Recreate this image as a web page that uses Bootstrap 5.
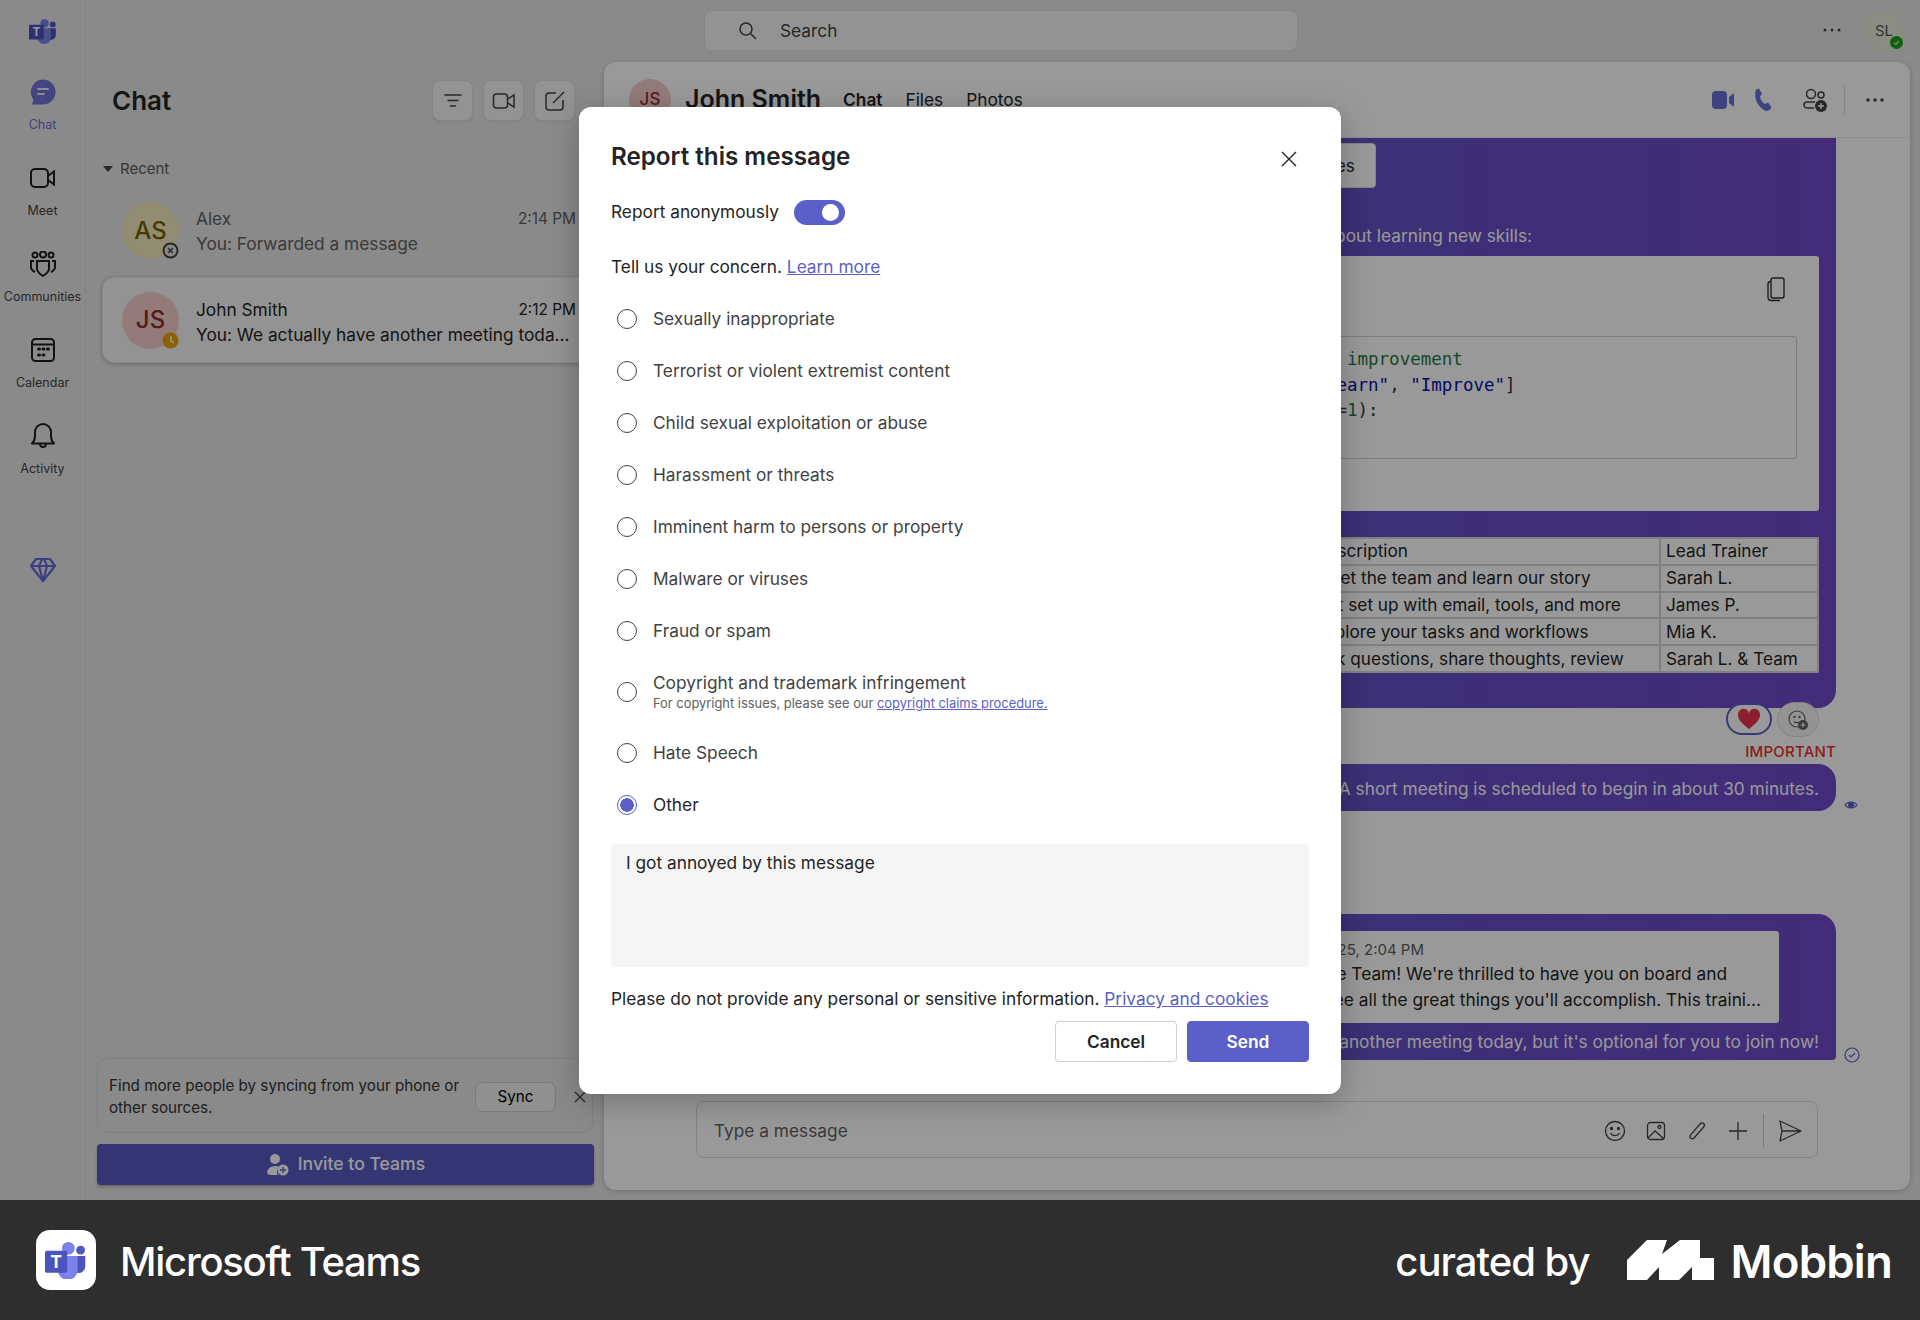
<!DOCTYPE html>
<html lang="en">
<head>
<meta charset="utf-8">
<title>Microsoft Teams</title>
<link href="https://cdn.jsdelivr.net/npm/bootstrap@5.3.0/dist/css/bootstrap.min.css" rel="stylesheet">
<style>
:root{--brand:#5b5fc7;}
html,body{margin:0;height:1320px;overflow:hidden;}
body{font-family:Inter,"Liberation Sans",sans-serif;font-size:17.3px;color:#242424;background:#2e2e2e;}
.stage{position:relative;height:1200px;overflow:hidden;background:#e6e6e6;}
.dim{position:absolute;inset:0;background:rgba(0,0,0,.4);}
.rail{width:86px;flex:none;border-right:1px solid #dcdcdc;}
.rail-logo{height:73px;padding-top:17px;}
.rail-item{height:86px;padding-top:6px;color:#424242;font-size:12.5px;}
.rail-item svg{display:block;height:26px;margin:0 auto;}
.rail-item span{display:block;margin-top:11px;line-height:18px;text-align:center;white-space:nowrap;}
.rail-item.on span{color:#6a6ec9;}
.rail-gem{margin-top:53px;}
.topbar{height:62px;}
.top-side{flex:1 1 0;}
.searchbox{width:594px;height:41px;margin:10px 0 0 12px;background:#f5f5f5;border:1px solid #e0e0e0;border-radius:8px;padding-left:33px;font-size:17.3px;color:#424242;gap:22px;}
.top-right{padding-right:16px;gap:22px;padding-top:11px;}
.me{width:40px;height:40px;border-radius:50%;background:#e6ecd9;color:#555;font-size:15px;position:relative;}
.me svg{position:absolute;right:1px;bottom:2px;}
.listcol{width:518px;flex:none;}
.list-head{margin:18px 29px 0 26px;height:41px;}
.list-title{font-size:26px;font-weight:600;}
.tool-row{gap:10px;}
.tool{width:41px;height:41px;background:#f5f5f5;border:1px solid #e0e0e0;border-radius:8px;box-shadow:0 1px 2px rgba(0,0,0,.08);}
.recent{margin:39px 0 0 17px;height:18px;font-size:15px;color:#5a5a5a;gap:7px;}
.tri{width:0;height:0;border:5px solid transparent;border-top:6px solid #424242;border-bottom:0;}
.person{height:86px;margin:0 -40px 0 11px;padding:0 0 0 25px;border-radius:12px;gap:17px;}
.person.sel{background:#f5f5f5;border:1px solid #e6e6e6;box-shadow:0 1px 4px rgba(0,0,0,.25);margin:3px -40px 0 16px;padding-left:19px;}
.person.first{margin-top:9px;height:87px;}
.ava{width:57px;height:57px;border-radius:50%;position:relative;font-size:24px;font-weight:500;flex:none;}
.ava-as{background:#f3e9c0;color:#7a6300;}
.ava-js{background:#f3cdca;color:#8c2f2a;}
.ava svg{position:absolute;right:0;bottom:0;}
.person-text{width:380px;line-height:25px;}
.person.sel .person-text{padding-top:3px;}
.person-time{font-size:15.4px;}
.muted-t{color:#616161;}
.sync{margin:auto 11px 11px 11px;height:75px;border:1px solid #d6d6d6;border-radius:10px;padding:2px 0 0 11px;font-size:15.2px;line-height:22px;color:#333;}
.sync-text{width:366px;}
.syncbtn{width:81px;height:30px;border:1px solid #ccc;border-radius:8px;background:#f0f0f0;font-size:15.2px;}
.sync-x{margin-left:18px;}
.invite{margin:0 10px 15px 11px;height:41px;background:#585bc2;border:0;border-radius:4px;color:#fff;font-size:17.6px;font-weight:500;gap:9px;box-shadow:0 2px 3px rgba(0,0,0,.25);}
.chatpanel{margin:0 10px 10px 0;background:#fff;border-radius:12px;box-shadow:0 1px 5px rgba(0,0,0,.2);overflow:hidden;min-width:0;}
.chat-head{height:76px;flex:none;border-bottom:1px solid #eee;padding:0 22px 0 25px;}
.ava-sm{width:42px;height:42px;font-size:17px;margin-right:14px;}
.chat-name{font-size:25px;font-weight:600;margin-right:22px;}
.chat-tab{margin-right:23px;}
.chat-tab.on{font-weight:600;}
.chat-tools{margin-left:auto;}
.tool-v{margin-right:18px;}
.tool-p{margin-right:29px;}
.chat-sep{width:1px;height:30px;background:#ddd;margin:0 21px 0 16px;}
.msgs{padding-right:74px;min-height:0;}
.bubble{width:686px;background:linear-gradient(90deg,#5e54c2,#7049cb);color:#fff;position:relative;}
.bub-a{height:570px;border-radius:0 0 18px 0;padding:5px 17px 0 0;}
.bub-note{margin:0 443px 0 auto;width:130px;height:45px;background:#fff;border:1px solid #ddd;border-radius:4px;color:#242424;padding-right:20px;}
.bub-line{margin:36px 287px 0 0;line-height:24px;height:24px;text-align:right;white-space:nowrap;}
.codewrap{margin-top:8px;height:255px;background:#fff;border-radius:0 3px 3px 0;padding:0 22px 0 0;}
.codetop{height:80px;padding:20px 9px 0 0;}
.codebox{margin:0 0 0 auto;height:123px;border:1px solid #d1d1d1;border-radius:3px;padding:10px 0 0 15px;width:603px;font-family:"DejaVu Sans Mono","Liberation Mono",monospace;font-size:17.5px;line-height:25.5px;color:#333;overflow:hidden;}
.c-g{color:#1f7a3f;}.c-b{color:#0b0ba8;}
.plan{width:513px;margin:26px 0 0 auto;background:#fff;border-collapse:collapse;color:#242424;font-size:17.2px;line-height:24px;}
.plan td{border:2px solid #d6d6d6;padding:0 7px;height:26.8px;white-space:nowrap;}
.plan td:last-child{width:158px;padding:0 5px;}
.reacts{margin:-6px 17px 0 0;gap:5px;height:35px;position:relative;}
.r-heart{width:46px;height:32px;margin-top:1px;border:2px solid var(--brand);border-radius:16px;background:#fff;}
.r-add{width:42px;height:35px;border:1px solid #ddd;border-radius:18px;background:#f5f5f5;}
.imp{color:#ee2f30;font-size:15px;font-weight:500;line-height:18px;margin-top:6px;letter-spacing:.2px;}
.imp-hold{height:27px;}
.bub-b{height:47px;border-radius:18px 18px 18px 0;padding-right:17px;line-height:49px;text-align:right;white-space:nowrap;}
.side-ic{position:absolute;left:100%;margin-left:8px;bottom:-1px;}
.side-low{bottom:-3px;}
.bub-c{margin-top:103px;height:146px;border-radius:18px 18px 4px 0;padding:17px 0 0 0;}
.reply{margin-right:57px;height:92px;background:#fff;border-radius:0 3px 3px 0;color:#242424;padding-top:7px;line-height:25.5px;text-align:right;white-space:nowrap;overflow:hidden;}
.rl-a{margin-right:355px;color:#616161;font-size:15px;line-height:23px;}
.rl-b{margin-right:52px;}
.rl-c{margin-right:18px;}
.bub-tail{margin:6px 17px 0 0;line-height:26px;text-align:right;white-space:nowrap;}
.compose{margin:0 92px 32px;height:57px;flex:none;border:1px solid #dcdcdc;border-radius:8px;padding:2px 0 0 17px;color:#616161;}
.comp-icons{margin-left:auto;padding-right:15px;}
.comp-ic{width:41px;display:flex;justify-content:center;}
.comp-sep{width:1px;height:34px;background:#ccc;margin:0 14px 0 5px;}
/* dialog */
.report{position:absolute;left:579px;top:107px;width:762px;height:987px;border:0;border-radius:12px;padding:32px;background:#fff;box-shadow:0 8px 30px rgba(0,0,0,.25);}
.rep-title{font-size:24.2px;font-weight:600;line-height:36px;margin:0;color:#242424;}
.rep-close{margin:3px 12px 0 0;}
.rep-anon{margin-top:24px;height:26px;gap:15px;}
.rep-switch{width:51px;height:25px;border-radius:13px;background:var(--brand);flex:none;position:relative;display:block;}
.rep-switch::after{content:"";position:absolute;right:6px;top:4px;width:17px;height:17px;border-radius:50%;background:#fff;}
.rep-tell{margin-top:29px;line-height:26px;}
.rep-tell a,.rep-foot a,.rep-sub a{color:var(--brand);}
.reasons{margin:13px 0 0 0;}
.reason{display:flex;align-items:center;height:52px;margin:0;padding:0;color:#424242;gap:16px;}
.reason .form-check-input{float:none;margin:0 0 0 6px;width:20px;height:20px;border:1.5px solid #424242;flex:none;}
.reason .form-check-input:checked{background-color:#fff;border-color:var(--brand);background-image:radial-gradient(circle,var(--brand) 0,var(--brand) 6.5px,transparent 7px);}
.reason.wide{height:70px;}
.reason.sel{color:#242424;}
.rep-sub{font-size:12.9px;line-height:16px;color:#616161;margin-top:2px;}
.rep-label{line-height:22px;}
.rep-area{margin-top:13px;height:123px;background:#f5f5f5;border:0;border-radius:4px;padding:7px 15px;font-size:17.3px;line-height:24px;color:#242424;resize:none;box-shadow:none;}
.rep-foot{margin-top:19px;line-height:26px;}
.rep-btns{margin-top:9px;gap:10px;}
.rep-btn{width:122px;height:41px;border-radius:4px;font-size:17.3px;font-weight:600;padding:0;}
.rep-cancel{background:#fff;border:1px solid #d1d1d1;color:#242424;}
.rep-send{background:var(--brand);border:1px solid var(--brand);color:#fff;}
/* footer */
.credit{height:120px;background:#2e2e2e;color:#fff;padding:0 28px 0 36px;}
.credit-app{width:60px;height:60px;background:#fff;border-radius:14px;margin-right:24px;}
.credit-name{font-size:40px;font-weight:500;letter-spacing:-1.25px;padding-top:4px;}
.credit-by{font-size:40px;font-weight:500;letter-spacing:-1px;margin-right:37px;padding-top:4px;}
.credit-mob{font-size:45.5px;font-weight:600;letter-spacing:-.8px;margin-left:17px;padding-top:4px;}
</style>
</head>
<body>
<div class="stage">
 <div class="d-flex h-100">
  <nav class="rail d-flex flex-column">
   <div class="rail-logo text-center"><svg width="28" height="26" viewBox="0 0 36 32"><circle cx="20" cy="6" r="5.500" fill="#7b83eb"/><circle cx="30.500" cy="7.500" r="3.800" fill="#4f57bf"/><path d="M24.500 12.500h10v9a5.500 5.500 0 0 1-8 5z" fill="#4b53bc"/><path d="M11 12.500h17v12a8.500 8.500 0 0 1-17 0z" fill="#7b83eb"/><rect x="0" y="8" width="19" height="19" rx="1.500" fill="#4b53bc"/><text x="9.500" y="23" font-size="15" font-weight="700" font-family="Inter,sans-serif" fill="#fff" text-anchor="middle">T</text></svg></div>
   <div class="rail-item on"><svg width="28" height="26" viewBox="0 0 28 26"><path d="M14 .5a12.500 12.500 0 0 1 0 25H2.500c1.500-2 2-3.500 1.500-5.500A12.500 12.500 0 0 1 14 .5z" fill="#7073d6"/><path d="M9 10h10M9 15h6" stroke="#e8e8f8" stroke-width="2" stroke-linecap="round"/></svg><span>Chat</span></div>
   <div class="rail-item"><svg width="28" height="26" viewBox="0 0 28 26" fill="none" stroke="#1f1f1f" stroke-width="2"><rect x="2" y="4" width="17" height="18" rx="4"/><path d="M19 11l6-4.500v13L19 15"/></svg><span>Meet</span></div>
   <div class="rail-item"><svg width="28" height="26" viewBox="0 0 28 26" fill="none" stroke="#1f1f1f" stroke-width="2"><circle cx="6" cy="4" r="2.500"/><circle cx="14" cy="3.500" r="3"/><circle cx="22" cy="4" r="2.500"/><path d="M8 10h12v8c0 3-3 5-6 7-3-2-6-4-6-7z"/><path d="M5 10H2v6c0 2 2 4 4 5M23 10h3v6c0 2-2 4-4 5"/></svg><span>Communities</span></div>
   <div class="rail-item"><svg width="28" height="26" viewBox="0 0 28 26" fill="none" stroke="#1f1f1f" stroke-width="2"><rect x="3" y="2" width="22" height="22" rx="3.500"/><path d="M3 7.500h22"/><path d="M9.500 12h1M14 12h1M18.500 12h1M9.500 18h1M14 18h1" stroke-width="3" stroke-linecap="round"/></svg><span>Calendar</span></div>
   <div class="rail-item"><svg width="28" height="26" viewBox="0 0 28 26" fill="none" stroke="#1f1f1f" stroke-width="2"><path d="M3 20.500c2-2 3-3.500 3-7.500V9a8 8 0 0 1 16 0v4c0 4 1 5.500 3 7.500z" stroke-linejoin="round"/><path d="M11 21a3 3 0 0 0 6 0"/></svg><span>Activity</span></div>
   <div class="rail-gem text-center"><svg width="26" height="24" viewBox="0 0 26 24" fill="none" stroke="#6468d8" stroke-width="2.200" stroke-linejoin="round"><path d="M6 1h14l5 7-12 15L1 8z"/><path d="M1 8h24M9 8l4 15 4-15M9 8l3-7h2l3 7"/></svg></div>
  </nav>
  <div class="flex-grow-1 d-flex flex-column min-w-0">
   <header class="topbar d-flex flex-none">
    <div class="top-side"></div>
    <div class="searchbox d-flex align-items-center"><svg width="20" height="20" viewBox="0 0 20 20" fill="none" stroke="#424242" stroke-width="1.500"><circle cx="8" cy="8" r="6"/><path d="M12.500 12.500L18 18"/></svg><span>Search</span></div>
    <div class="top-side top-right d-flex justify-content-end"><svg width="20" height="40" viewBox="0 0 20 40" fill="#424242"><circle cx="3" cy="19" r="1.500"/><circle cx="10" cy="19" r="1.500"/><circle cx="17" cy="19" r="1.500"/></svg><div class="me d-flex align-items-center justify-content-center">SL<svg width="13" height="13" viewBox="0 0 13 13"><circle cx="6.500" cy="6.500" r="6.500" fill="#16a016"/><path d="M4 6.700l1.800 1.800L9 5" stroke="#e6e6e6" stroke-width="1.200" fill="none"/></svg></div></div>
   </header>
   <div class="flex-grow-1 d-flex min-h-0">
    <aside class="listcol d-flex flex-column">
     <div class="list-head d-flex align-items-center">
      <div class="list-title me-auto">Chat</div>
      <div class="d-flex tool-row">
       <div class="tool d-flex align-items-center justify-content-center"><svg width="20" height="20" viewBox="0 0 20 20" stroke="#424242" stroke-width="1.500" stroke-linecap="round"><path d="M2 4h16M5 9.500h10M7.500 15h5"/></svg></div>
       <div class="tool d-flex align-items-center justify-content-center"><svg width="24" height="20" viewBox="0 0 24 20" fill="none" stroke="#424242" stroke-width="1.500"><rect x="1.500" y="3" width="14" height="14" rx="3"/><path d="M16 8l6-4v12l-6-4"/></svg></div>
       <div class="tool d-flex align-items-center justify-content-center"><svg width="22" height="22" viewBox="0 0 22 22" fill="none" stroke="#424242" stroke-width="1.500"><path d="M12 3H5a3 3 0 0 0-3 3v11a3 3 0 0 0 3 3h11a3 3 0 0 0 3-3v-7"/><path d="M9 13l11-11"/></svg></div>
      </div>
     </div>
     <div class="recent d-flex align-items-center"><span class="tri"></span><span>Recent</span></div>
     <div class="person first d-flex align-items-center">
      <div class="ava ava-as d-flex align-items-center justify-content-center">AS<svg width="17" height="17" viewBox="0 0 17 17"><circle cx="8.500" cy="8.500" r="7" fill="#e6e6e6" stroke="#424242" stroke-width="2"/><path d="M6 6l5 5M11 6l-5 5" stroke="#424242" stroke-width="1.500"/></svg></div>
      <div class="person-text"><div class="d-flex justify-content-between align-items-center muted-t"><span>Alex</span><span class="person-time">2:14 PM</span></div><div class="muted-t">You: Forwarded a message</div></div>
     </div>
     <div class="person sel d-flex align-items-center">
      <div class="ava ava-js d-flex align-items-center justify-content-center">JS<svg width="17" height="17" viewBox="0 0 17 17"><circle cx="8.500" cy="8.500" r="8" fill="#eaa300"/><path d="M9 4v5l3 2" stroke="#fff" stroke-width="1.500" fill="none"/></svg></div>
      <div class="person-text"><div class="d-flex justify-content-between align-items-center"><span>John Smith</span><span class="person-time">2:12 PM</span></div><div class="text-truncate">You: We actually have another meeting toda...</div></div>
     </div>
     <div class="sync d-flex align-items-center">
      <div class="sync-text">Find more people by syncing from your phone or other sources.</div>
      <button class="syncbtn" type="button">Sync</button>
      <svg class="sync-x" width="12" height="12" viewBox="0 0 12 12" stroke="#424242" stroke-width="1.300"><path d="M1 1l10 10M11 1L1 11"/></svg>
     </div>
     <button class="invite d-flex align-items-center justify-content-center" type="button"><svg width="23" height="23" viewBox="0 0 23 23" fill="#fff"><circle cx="9" cy="6" r="5"/><path d="M1 20a8 7 0 0 1 8-7c2 0 3 .5 4 1a6 6 0 0 0-1 8H5a4 4 0 0 1-4-2z"/><circle cx="17" cy="17" r="5.500"/><path d="M17 14v6M14 17h6" stroke="#5b5fc7" stroke-width="1.300"/></svg><span>Invite to Teams</span></button>
    </aside>
    <main class="chatpanel flex-grow-1 d-flex flex-column">
     <div class="chat-head d-flex align-items-center">
      <div class="ava ava-js ava-sm d-flex align-items-center justify-content-center">JS</div>
      <div class="chat-name">John Smith</div>
      <div class="chat-tab on">Chat</div><div class="chat-tab">Files</div><div class="chat-tab">Photos</div>
      <div class="chat-tools d-flex align-items-center">
       <svg class="tool-v" width="24" height="20" viewBox="0 0 24 20" fill="#6a6ed8"><rect x="1" y="1" width="15" height="18" rx="4"/><path d="M18 7l5-4v14l-5-4z"/></svg>
       <svg class="tool-p" width="20" height="24" viewBox="0 0 20 24" fill="#6a6ed8"><path d="M3 1.500l3-1 3 5.500-2 2.500c.5 3 2 5.500 5 7.500l3-1.500 3.500 5c-1 2-3 3.500-5 3.500C6 21 0 10 3 1.500z"/></svg>
       <svg width="26" height="24" viewBox="0 0 26 24" fill="none" stroke="#424242" stroke-width="1.500"><circle cx="9" cy="6" r="4.500"/><circle cx="19" cy="7" r="3"/><path d="M13 14H5c-2 0-3 1-3 3s2 3 3 3h7"/><circle cx="19" cy="18" r="6" fill="#424242" stroke="none"/><path d="M19 15v6M16 18h6" stroke="#fff"/></svg>
       <span class="d-block chat-sep"></span>
       <svg class="me-1" width="18" height="6" viewBox="0 0 18 6" fill="#424242"><circle cx="2" cy="3" r="1.700"/><circle cx="9" cy="3" r="1.700"/><circle cx="16" cy="3" r="1.700"/></svg>
      </div>
     </div>
     <div class="msgs flex-grow-1 d-flex flex-column align-items-end">
      <div class="bubble bub-a">
       <div class="bub-note d-flex align-items-center justify-content-end">Notes</div>
       <div class="bub-line">Let's talk about learning new skills:</div>
       <div class="codewrap">
        <div class="codetop d-flex justify-content-end"><svg width="24" height="26" viewBox="0 0 24 26" fill="none" stroke="#333" stroke-width="1.400"><rect x="7" y="2" width="13" height="20" rx="2"/><path d="M7 5.500C5 5.500 4 6.500 4 8v13c0 2 1.500 3.500 3.500 3.500H16"/></svg></div>
<pre class="codebox"><span class="c-g"># Continuous improvement</span>
skills = [<span class="c-b">"Learn"</span>, <span class="c-b">"Improve"</span>]
enum(step, n=<span class="c-g">1</span>):</pre>
       </div>
       <table class="plan">
        <tr><td>Description</td><td>Lead Trainer</td></tr>
        <tr><td>Meet the team and learn our story</td><td>Sarah L.</td></tr>
        <tr><td>Get set up with email, tools, and more</td><td>James P.</td></tr>
        <tr><td>Explore your tasks and workflows</td><td>Mia K.</td></tr>
        <tr><td>Ask questions, share thoughts, review</td><td>Sarah L. &amp; Team</td></tr>
       </table>
      </div>
      <div class="reacts d-flex">
       <div class="r-heart d-flex align-items-center justify-content-center"><svg width="24" height="22" viewBox="0 0 24 22"><path d="M12 21C4 15 1 11 1 7a5.500 5.500 0 0 1 11-1.500A5.500 5.500 0 0 1 23 7c0 4-3 8-11 14z" fill="#e8344e"/></svg></div>
       <div class="r-add d-flex align-items-center justify-content-center"><svg width="22" height="22" viewBox="0 0 22 22" fill="none" stroke="#616161" stroke-width="1.200"><circle cx="10" cy="10" r="8"/><circle cx="7.500" cy="8" r=".6"/><circle cx="12.500" cy="8" r=".6"/><path d="M7 12.500c1.500 1.500 4 1.500 5 .5"/><circle cx="16" cy="16" r="5" fill="#616161" stroke="none"/><path d="M16 13.500v5M13.500 16h5" stroke="#fff"/></svg></div>
      </div>
      <div class="imp-hold"><div class="imp">IMPORTANT</div></div>
      <div class="bubble bub-b">A short meeting is scheduled to begin in about 30 minutes.<svg class="side-ic" width="14" height="14" viewBox="0 0 14 14" fill="none" stroke="#5b5fc7" stroke-width="1.200"><path d="M1 7c3-4 9-4 12 0-3 4-9 4-12 0z"/><circle cx="7" cy="7" r="2.500" fill="#5b5fc7"/></svg></div>
      <div class="bubble bub-c">
       <div class="reply">
        <div class="rl-a">Jan 25, 2:04 PM</div>
        <div class="rl-b">Welcome to the Team! We're thrilled to have you on board and</div>
        <div class="rl-c">can't wait to see all the great things you'll accomplish. This traini...</div>
       </div>
       <div class="bub-tail">We actually have another meeting today, but it's optional for you to join now!</div>
       <svg class="side-ic side-low" width="16" height="16" viewBox="0 0 16 16" fill="none" stroke="#5b5fc7" stroke-width="1.200"><circle cx="8" cy="8" r="7"/><path d="M5 8l2 2 4-4"/></svg>
      </div>
     </div>
     <div class="compose d-flex align-items-center">
      <span>Type a message</span>
      <div class="comp-icons d-flex align-items-center">
       <div class="comp-ic"><svg width="22" height="22" viewBox="0 0 22 22" fill="none" stroke="#424242" stroke-width="1.300"><circle cx="11" cy="11" r="9.500"/><circle cx="7.500" cy="8.500" r="1" fill="#424242"/><circle cx="14.500" cy="8.500" r="1" fill="#424242"/><path d="M6.500 13c2 3.500 7 3.500 9 0"/></svg></div>
       <div class="comp-ic"><svg width="20" height="20" viewBox="0 0 20 20" fill="none" stroke="#424242" stroke-width="1.300"><rect x="1.500" y="1.500" width="17" height="17" rx="3"/><circle cx="13.500" cy="6" r="1.500"/><path d="M2 17l7-7 9 8"/></svg></div>
       <div class="comp-ic"><svg width="20" height="20" viewBox="0 0 20 20" fill="none" stroke="#424242" stroke-width="1.300"><path d="M3.500 14.200L13 3c2.500-2.500 5.800.3 3.700 3L7 17c-2 2-5.200-.3-3.500-2.800"/></svg></div>
       <div class="comp-ic"><svg width="20" height="20" viewBox="0 0 20 20" stroke="#424242" stroke-width="1.300"><path d="M10 1v18M1 10h18"/></svg></div>
       <span class="comp-sep"></span>
       <svg width="24" height="22" viewBox="0 0 24 22" fill="none" stroke="#424242" stroke-width="1.300" stroke-linejoin="round"><path d="M2 1l21 10L2 21l2-10zM4 11h19"/></svg>
      </div>
     </div>
    </main>
   </div>
  </div>
 </div>
 <div class="dim"></div>
 <section class="report d-flex flex-column">
  <div class="d-flex align-items-center justify-content-between"><h1 class="rep-title">Report this message</h1><svg class="rep-close" width="16" height="16" viewBox="0 0 16 16" stroke="#242424" stroke-width="1.400"><path d="M1 1l14 14M15 1L1 15"/></svg></div>
  <div class="rep-anon d-flex align-items-center"><span>Report anonymously</span><span class="rep-switch"></span></div>
  <div class="rep-tell">Tell us your concern. <a href="#">Learn more</a></div>
  <div class="reasons">
   <label class="reason form-check"><input class="form-check-input" type="radio" name="why"><span>Sexually inappropriate</span></label>
   <label class="reason form-check"><input class="form-check-input" type="radio" name="why"><span>Terrorist or violent extremist content</span></label>
   <label class="reason form-check"><input class="form-check-input" type="radio" name="why"><span>Child sexual exploitation or abuse</span></label>
   <label class="reason form-check"><input class="form-check-input" type="radio" name="why"><span>Harassment or threats</span></label>
   <label class="reason form-check"><input class="form-check-input" type="radio" name="why"><span>Imminent harm to persons or property</span></label>
   <label class="reason form-check"><input class="form-check-input" type="radio" name="why"><span>Malware or viruses</span></label>
   <label class="reason form-check"><input class="form-check-input" type="radio" name="why"><span>Fraud or spam</span></label>
   <label class="reason form-check wide"><input class="form-check-input" type="radio" name="why"><span><span class="d-block rep-label">Copyright and trademark infringement</span><span class="d-block rep-sub">For copyright issues, please see our <a href="#">copyright claims procedure.</a></span></span></label>
   <label class="reason form-check"><input class="form-check-input" type="radio" name="why"><span>Hate Speech</span></label>
   <label class="reason form-check sel"><input class="form-check-input" type="radio" name="why" checked><span>Other</span></label>
  </div>
  <textarea class="form-control rep-area" rows="3">I got annoyed by this message</textarea>
  <div class="rep-foot">Please do not provide any personal or sensitive information. <a href="#">Privacy and cookies</a></div>
  <div class="rep-btns d-flex justify-content-end"><button class="btn rep-btn rep-cancel" type="button">Cancel</button><button class="btn rep-btn rep-send" type="button">Send</button></div>
 </section>
</div>
<footer class="credit d-flex align-items-center">
 <div class="credit-app d-flex align-items-center justify-content-center"><svg width="42" height="38" viewBox="0 0 36 32"><circle cx="20" cy="6" r="5.500" fill="#7b83eb"/><circle cx="30.500" cy="7.500" r="3.800" fill="#4f57bf"/><path d="M24.500 12.500h10v9a5.500 5.500 0 0 1-8 5z" fill="#4b53bc"/><path d="M11 12.500h17v12a8.500 8.500 0 0 1-17 0z" fill="#7b83eb"/><rect x="0" y="8" width="19" height="19" rx="1.500" fill="#4b53bc"/><text x="9.500" y="23" font-size="15" font-weight="700" font-family="Inter,sans-serif" fill="#fff" text-anchor="middle">T</text></svg></div>
 <div class="credit-name me-auto">Microsoft Teams</div>
 <div class="credit-by">curated by</div>
 <svg width="87" height="40" viewBox="0 0 87 40" fill="#fff"><path d="M0 20L20 0H40L35 14L53 0H73V18H87V40H65V27L52 40H32V27L20 40H0Z"/></svg>
 <div class="credit-mob">Mobbin</div>
</footer>
<script src="https://cdn.jsdelivr.net/npm/bootstrap@5.3.0/dist/js/bootstrap.bundle.min.js"></script>
</body>
</html>
